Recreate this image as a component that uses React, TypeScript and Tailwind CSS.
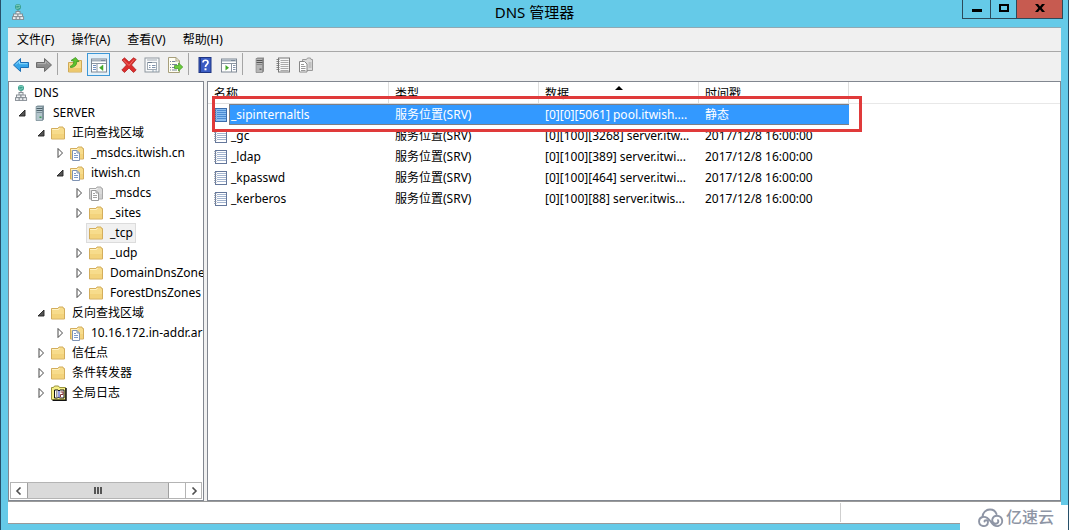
import type { ReactNode } from "react";

type IconProps = { className?: string };

function DnsIcon({ className = "w-4 h-4" }: IconProps) {
  return (
    <svg viewBox="0 0 16 16" className={className} aria-hidden="true">
      <circle cx="8" cy="3" r="3" fill="#3aa08e" />
      <path d="M6 2q2-2 4 0M6 4q2 1 4-1" stroke="#9be0cc" fill="none" strokeWidth=".8" />
      <path d="M8 6v2.500M5 11h6" stroke="#777f86" fill="none" />
      <g fill="#eef1f3" stroke="#80888f" strokeWidth=".9">
        <rect x="6" y="7.500" width="4" height="3" />
        <rect x="3.500" y="10" width="4.500" height="2.700" />
        <rect x="8" y="10" width="4.500" height="2.700" />
        <rect x="2.500" y="12.700" width="3.700" height="2.700" />
        <rect x="6.200" y="12.700" width="3.700" height="2.700" />
        <rect x="9.900" y="12.700" width="3.700" height="2.700" />
      </g>
    </svg>
  );
}

function ServerIcon({ gray = false }: { gray?: boolean }) {
  return (
    <svg viewBox="0 0 16 16" className="w-4 h-4" aria-hidden="true">
      <path d="M4 1.500 5.500.5h6.500v14l-1.500 1H4z" fill={gray ? "#8b8b8b" : "#7f929b"} />
      <path d="M4 1.500h6.500v14H4z" fill={gray ? "#b5b5b5" : "#b3c5cc"} stroke={gray ? "#858585" : "#73878f"} strokeWidth=".6" />
      <path d="M4.500 3.500h6M4.500 5.500h6" stroke={gray ? "#555" : "#4c6069"} />
      <path d="M4.500 7.500h6" stroke={gray ? "#888" : "#7e929b"} />
      <rect x="7.500" y="11.500" width="2" height="1.500" fill={gray ? "#666" : "#3c9c57"} />
    </svg>
  );
}

function FolderShape({ gray = false }: { gray?: boolean }) {
  return (
    <>
      <path d="M.5 3.500h6.500l1-1.500H12l.5 1.500h1v10.500H.5z" fill={gray ? "#dadada" : "#f7dc8c"} stroke={gray ? "#a8a8a8" : "#d3ad5c"} />
      <path d="M1 4.500h6.500l1-1.500" fill="none" stroke={gray ? "#f4f4f4" : "#fff3c4"} />
      <path d="M1 9h12v4.500H1z" fill={gray ? "#c6c6c6" : "#efc96c"} opacity=".5" />
    </>
  );
}

function FolderIcon() {
  return (
    <svg viewBox="0 0 16 16" className="w-4 h-4" aria-hidden="true">
      <FolderShape />
    </svg>
  );
}

function ZoneIcon({ gray = false }: { gray?: boolean }) {
  return (
    <svg viewBox="0 0 16 16" className="w-4 h-4" aria-hidden="true">
      <FolderShape gray={gray} />
      <path d="M2.500 5.500h4.500l2.500 2.500v7.500h-7z" fill="#fff" stroke={gray ? "#999" : "#7f93b3"} />
      <path d="M7 5.500V8h2.500" fill="none" stroke={gray ? "#999" : "#7f93b3"} />
      <path d="M4 8.500h2M4 10.500h4M4 12.500h4" stroke={gray ? "#999" : "#6c8fc4"} strokeWidth=".9" />
    </svg>
  );
}

function LogIcon() {
  return (
    <svg viewBox="0 0 16 16" className="w-4 h-4" aria-hidden="true">
      <path d="M.5 2.500h2l1-1.500h4l1 1.500h6v12H.5z" fill="#f6ef86" stroke="#98923a" />
      <path d="M15 3v12.500H1.500" fill="none" stroke="#111" strokeWidth="1.500" />
      <path d="M3.500 5v8h3l1-1 1 1H13V5H9L8 6 7 5z" fill="#fff" stroke="#111" />
      <path d="M8 6v6.500" stroke="#2a3bc0" />
      <path d="M5 7h1.500M5 9h1.500M5 11h1.500" stroke="#333" />
      <path d="M9.500 7H12v2.500H9.500V12" fill="none" stroke="#8a3434" />
    </svg>
  );
}

function RecordIcon({ selected = false }: { selected?: boolean }) {
  return (
    <svg viewBox="0 0 14 16" className="w-3.5 h-4 shrink-0" aria-hidden="true">
      <rect x="1.500" y="1.500" width="11" height="13" fill={selected ? "#8cc0f3" : "#fff"} stroke={selected ? "#3c6cab" : "#64779b"} />
      <path d="M3 3.500h9M3 5.500h9M3 7.500h9M3 9.500h9M3 11.500h9" stroke={selected ? "#4d8cd2" : "#a3b4cf"} />
      <path d="M0 2.500h2.500M0 4.500h2.500M0 6.500h2.500M0 8.500h2.500M0 10.500h2.500M0 12.500h2.500" stroke="#8a94a5" strokeWidth=".8" />
    </svg>
  );
}

function ArrowIcon({ forward = false }: { forward?: boolean }) {
  return (
    <svg viewBox="0 0 18 16" className="w-[18px] h-4" aria-hidden="true">
      {forward ? (
        <>
          <path d="M16.500 8 9.500 1.500v4h-8v5h8v4z" fill="#8b8b8b" stroke="#6c6c6c" />
          <path d="M2.500 6.700h8V4l3.500 3.500" fill="none" stroke="#b5b5b5" />
        </>
      ) : (
        <>
          <path d="M1.500 8 8.500 1.500v4h8v5h-8v4z" fill="#36a5e9" stroke="#1c6fb5" />
          <path d="M15.500 6.700h-8V4L4 7.500" fill="none" stroke="#8fdcff" />
        </>
      )}
    </svg>
  );
}

function FolderUpIcon() {
  return (
    <svg viewBox="0 0 16 16" className="w-4 h-4" aria-hidden="true">
      <path d="M.5 5.500h8l1-2h4V15H.5z" fill="#f7dc8c" stroke="#cfa956" />
      <path d="M1 11h12v3.500H1z" fill="#edc86c" />
      <path d="M2.500 10.500C6.500 10.500 9 8 8.700 4.500H11L7.500.5l-4.500 3 2.800.7C6 7 4.500 8.500 2.500 9z" fill="#5cc32d" stroke="#378a1b" strokeWidth=".7" />
    </svg>
  );
}

function PaneIcon({ right = false }: { right?: boolean }) {
  return (
    <svg viewBox="0 0 16 16" className="w-4 h-4" aria-hidden="true">
      <rect x=".5" y="2" width="15" height="13" fill="#fff" stroke="#7e8894" />
      <path d="M1 3.500h14" stroke="#a5b0bc" strokeWidth="2" />
      <path d="M10.500 3.500h1M12.500 3.500h1" stroke="#4d6078" />
      <path d={right ? "M1 6.500h14M10.500 6.500V15" : "M1 6.500h14M6 6.500V15"} stroke="#8b96a2" />
      {right ? (
        <>
          <path d="M4.500 8v5.500L8 10.700z" fill="#43a929" />
          <path d="M12 8.500h2.500M12 10.500h2.500M12 12.500h2.500" stroke="#8293ab" />
        </>
      ) : (
        <>
          <path d="M12 8v5.500L8.500 10.700z" fill="#43a929" stroke="#43a929" strokeWidth=".5" />
          <path d="M2 8.500h3M2 10.500h3M2 12.500h3" stroke="#6e8fbf" />
        </>
      )}
    </svg>
  );
}

function DeleteIcon() {
  return (
    <svg viewBox="0 0 16 16" className="w-4 h-4" aria-hidden="true">
      <path d="M1 3 3.500.8 8 5 12.500.8 15.200 2.500 10.500 8l4.700 5-2.700 2.500L8 11l-4.500 4.500L.8 13l4.700-5z" fill="#dc2d2d" stroke="#a81c1c" strokeWidth=".7" />
      <path d="M2.500 3 8 8.500l5-6" fill="none" stroke="#f28375" strokeWidth=".8" />
    </svg>
  );
}

function PropertiesIcon() {
  return (
    <svg viewBox="0 0 16 16" className="w-4 h-4" aria-hidden="true">
      <rect x="1" y="1" width="14" height="14" fill="#f8f9fa" stroke="#8d969e" />
      <path d="M3 3h10" stroke="#a3acb5" />
      <rect x="3.500" y="5.500" width="9" height="7" fill="#fff" stroke="#a0aab4" />
      <path d="M4 5.500h4" stroke="#6e7e90" />
      <path d="M5 8.500h1.500M5 10.500h1.500M8 8.500h3.500M8 10.500h3.500" stroke="#7f93ac" />
      <path d="M8 14h2M11.500 14H13" stroke="#8fa0b0" />
    </svg>
  );
}

function ExportIcon() {
  return (
    <svg viewBox="0 0 16 16" className="w-4 h-4" aria-hidden="true">
      <path d="M1.500.5H9L12.500 4v11.500h-11z" fill="#fffef2" stroke="#a79f7c" />
      <path d="M9 .5V4h3.500" fill="none" stroke="#a79f7c" />
      <path d="M3 4.500h1M3 7.500h1M3 10.500h1M3 13h1M5 4.500h3.500M5 7.500h5M5 10.500h3M5 13h5" stroke="#78859d" />
      <path d="M7.500 8.500h4V6l4.300 4-4.300 4v-2.500h-4z" fill="#6bcb3b" stroke="#3d9721" strokeWidth=".7" />
    </svg>
  );
}

function HelpIcon() {
  return (
    <svg viewBox="0 0 16 16" className="w-4 h-4" aria-hidden="true">
      <rect x="2" y=".5" width="12" height="15" fill="#3a5cc4" stroke="#1f3582" />
      <path d="M3.500 1v14" stroke="#20377f" />
      <path d="M6 5.500C6 2.500 11 2.500 11 5.500c0 2-2.500 2-2.500 4.500" fill="none" stroke="#fff" strokeWidth="1.700" />
      <rect x="7.500" y="11.300" width="2" height="2" fill="#fff" />
    </svg>
  );
}

function NotebookIcon() {
  return (
    <svg viewBox="0 0 16 16" className="w-4 h-4" aria-hidden="true">
      <rect x="3.500" y="1" width="11" height="14" fill="#f7f7f7" stroke="#777" />
      <path d="M5.500 3.500h8M5.500 5.500h8M5.500 7.500h8M5.500 9.500h8M5.500 11.500h8M5.500 13.500h8" stroke="#aaa" />
      <path d="M1.500 2.500h3M1.500 4.500h3M1.500 6.500h3M1.500 8.500h3M1.500 10.500h3M1.500 12.500h3" stroke="#777" strokeWidth=".9" />
    </svg>
  );
}

function CopyIcon() {
  return (
    <svg viewBox="0 0 16 16" className="w-4 h-4" aria-hidden="true">
      <path d="M4.500 2.500h4l1-1.500h3l.5 1.500h1.500v11h-10z" fill="#dcdcdc" stroke="#9a9a9a" />
      <path d="M1.500 4.500h5L9 7v8H1.500z" fill="#fff" stroke="#888" />
      <path d="M3 7.500h3M3 9.500h4.500M3 11.500h4.500M3 13.500h4.500" stroke="#999" />
      <path d="M10.500 6h3M10.500 8h3M10.500 10h3" stroke="#a5a5a5" />
    </svg>
  );
}

function Toggle({ open }: { open: boolean }) {
  return (
    <svg viewBox="0 0 12 12" className="w-3 h-3" aria-hidden="true">
      {open ? (
        <path d="M9 3v6H3z" fill="#555" stroke="#222" strokeWidth=".9" />
      ) : (
        <path d="M4 1.500 8.500 6 4 10.500z" fill="#fff" stroke="#333" strokeWidth=".9" />
      )}
    </svg>
  );
}

type Node = {
  label: string;
  icon: ReactNode;
  open?: boolean;
  leaf?: boolean;
  selected?: boolean;
  children?: Node[];
};

const tree: Node[] = [
  {
    label: "SERVER",
    icon: <ServerIcon />,
    open: true,
    children: [
      {
        label: "正向查找区域",
        icon: <FolderIcon />,
        open: true,
        children: [
          { label: "_msdcs.itwish.cn", icon: <ZoneIcon /> },
          {
            label: "itwish.cn",
            icon: <ZoneIcon />,
            open: true,
            children: [
              { label: "_msdcs", icon: <ZoneIcon gray /> },
              { label: "_sites", icon: <FolderIcon /> },
              { label: "_tcp", icon: <FolderIcon />, leaf: true, selected: true },
              { label: "_udp", icon: <FolderIcon /> },
              { label: "DomainDnsZones", icon: <FolderIcon /> },
              { label: "ForestDnsZones", icon: <FolderIcon /> },
            ],
          },
        ],
      },
      {
        label: "反向查找区域",
        icon: <FolderIcon />,
        open: true,
        children: [{ label: "10.16.172.in-addr.arpa", icon: <ZoneIcon /> }],
      },
      { label: "信任点", icon: <FolderIcon /> },
      { label: "条件转发器", icon: <FolderIcon /> },
      { label: "全局日志", icon: <LogIcon /> },
    ],
  },
];

function TreeItem({ node }: { node: Node }) {
  return (
    <li>
      <div className="flex h-5 items-center gap-px">
        {node.leaf ? (
          <span className="w-3 shrink-0" />
        ) : (
          <button type="button" aria-label={node.label} aria-expanded={!!node.open} className="shrink-0">
            <Toggle open={!!node.open} />
          </button>
        )}
        <span
          className={
            node.selected
              ? "flex h-5 items-center gap-[5px] border border-[#dcdcdc] bg-[#f1f1f1] px-[2px]"
              : "flex h-5 items-center gap-[5px] border border-transparent px-[2px]"
          }
        >
          <span className="shrink-0">{node.icon}</span>
          <span className="whitespace-nowrap">{node.label}</span>
        </span>
      </div>
      {node.children && (
        <ul className="pl-[19px]">
          {node.children.map((c) => (
            <TreeItem key={c.label} node={c} />
          ))}
        </ul>
      )}
    </li>
  );
}

function ToolButton({ label, active = false, children }: { label: string; active?: boolean; children: ReactNode }) {
  return (
    <button
      type="button"
      aria-label={label}
      className={
        active
          ? "flex h-[23px] w-[23px] items-center justify-center border border-[#3c97d6] bg-[#e3f1fa]"
          : "flex h-[23px] w-[23px] items-center justify-center"
      }
    >
      {children}
    </button>
  );
}

function Separator() {
  return <span className="mr-1 ml-[2px] h-[22px] w-px bg-[#a5a5a5]" />;
}

const records = [
  { name: "_sipinternaltls", data: "[0][0][5061] pool.itwish....", time: "静态", selected: true },
  { name: "_gc", data: "[0][100][3268] server.itw...", time: "2017/12/8 16:00:00" },
  { name: "_ldap", data: "[0][100][389] server.itwi...", time: "2017/12/8 16:00:00" },
  { name: "_kpasswd", data: "[0][100][464] server.itwi...", time: "2017/12/8 16:00:00" },
  { name: "_kerberos", data: "[0][100][88] server.itwis...", time: "2017/12/8 16:00:00" },
];

const menus = ["文件(F)", "操作(A)", "查看(V)", "帮助(H)"];

const headCell = "border-r border-b border-[#dedede] p-0 pt-[2px] pl-[6px] font-normal";
const cell = "p-0 pl-[6px]";
const selectedCell = "border-y border-[#7d7f86] bg-[#3399ff] p-0 pl-[6px]";

export default function App() {
  return (
    <div className="relative flex h-screen flex-col overflow-hidden border-x border-[#27506a] bg-[#65cae8] px-[7px] pb-[6px] font-['Noto_Sans','Noto_Sans_CJK_SC',sans-serif] text-[12px] text-black">
      <header className="grid h-[27px] shrink-0 grid-cols-[1fr_auto_1fr] items-start">
        <DnsIcon className="mt-1 ml-[2px] h-4 w-4" />
        <h1 className="text-[15px] leading-[25px]">DNS 管理器</h1>
        <div className="-mr-[2px] flex h-[19px] justify-self-end border border-t-0 border-[#2c4a5a]">
          <button type="button" aria-label="最小化" className="flex w-[27px] items-center justify-center">
            <svg viewBox="0 0 10 10" className="h-2.5 w-2.5"><path d="M0 5h10v3H0z" /></svg>
          </button>
          <button type="button" aria-label="最大化" className="flex w-[27px] items-center justify-center border-x border-[#2c4a5a]">
            <svg viewBox="0 0 10 8" className="mb-[2px] h-2 w-2.5"><path d="M1 1h8v6H1z" fill="none" stroke="#000" strokeWidth="2" /></svg>
          </button>
          <button type="button" aria-label="关闭" className="flex w-[45px] items-center justify-center bg-[#c75b50]">
            <svg viewBox="0 0 10 8" className="mb-[2px] h-2 w-2.5"><path d="M0 0h3l2 2.500L7 0h3L6.700 4 10 8H7L5 5.500 3 8H0l3.300-4z" /></svg>
          </button>
        </div>
      </header>

      <div className="flex min-h-0 flex-1 flex-col border-t border-[#8fa9b4] bg-[#f0f0f0]">
        <nav className="flex h-6 shrink-0 items-center gap-[17px] border-b border-[#a8a8a8] pl-[9px]">
          {menus.map((m) => (
            <button key={m} type="button" className="whitespace-nowrap">{m}</button>
          ))}
        </nav>

        <div role="toolbar" className="flex h-[29px] shrink-0 items-start pt-px pl-px">
          <ToolButton label="后退"><ArrowIcon /></ToolButton>
          <ToolButton label="前进"><ArrowIcon forward /></ToolButton>
          <Separator />
          <span className="w-[2px]" />
          <ToolButton label="上一级"><FolderUpIcon /></ToolButton>
          <ToolButton label="显示/隐藏控制台树" active><PaneIcon /></ToolButton>
          <span className="w-[7px]" />
          <ToolButton label="删除"><DeleteIcon /></ToolButton>
          <ToolButton label="属性"><PropertiesIcon /></ToolButton>
          <ToolButton label="导出列表"><ExportIcon /></ToolButton>
          <Separator />
          <ToolButton label="帮助"><HelpIcon /></ToolButton>
          <span className="w-px" />
          <ToolButton label="显示/隐藏操作窗格"><PaneIcon right /></ToolButton>
          <Separator />
          <span className="w-px" />
          <ToolButton label="服务器"><ServerIcon gray /></ToolButton>
          <ToolButton label="记录"><NotebookIcon /></ToolButton>
          <ToolButton label="复制"><CopyIcon /></ToolButton>
        </div>

        <main className="flex min-h-0 flex-1 gap-[3px]">
          <aside className="flex w-[196px] shrink-0 flex-col border border-[#828790] bg-white pb-px">
            <div className="min-h-0 flex-1 overflow-hidden pt-px">
              <div className="flex h-5 items-center gap-[5px] pl-1">
                <DnsIcon />
                <span>DNS</span>
              </div>
              <ul className="pl-[7px]">
                {tree.map((n) => (
                  <TreeItem key={n.label} node={n} />
                ))}
              </ul>
            </div>
            <div className="mx-px flex h-[17px] shrink-0 border border-[#b4b4b4]">
              <button type="button" aria-label="向左滚动" className="flex w-4 items-center justify-center">
                <svg viewBox="0 0 8 8" className="h-2 w-2"><path d="M5.500.5 2 4l3.500 3.500" fill="none" stroke="#505050" strokeWidth="1.600" /></svg>
              </button>
              <div className="flex w-[142px] items-center justify-center gap-px border-x border-[#a0a0a0] bg-[#dadada]">
                <span className="h-[7px] w-[2px] bg-[#555]" />
                <span className="h-[7px] w-[2px] bg-[#555]" />
                <span className="h-[7px] w-[2px] bg-[#555]" />
              </div>
              <span className="flex-1" />
              <button type="button" aria-label="向右滚动" className="flex w-4 items-center justify-center border-l border-[#b4b4b4]">
                <svg viewBox="0 0 8 8" className="h-2 w-2"><path d="M2.500.5 6 4 2.500 7.500" fill="none" stroke="#505050" strokeWidth="1.600" /></svg>
              </button>
            </div>
          </aside>

          <section className="relative min-w-0 flex-1 overflow-hidden border border-[#828790] bg-white">
            <table className="w-full table-fixed border-separate border-spacing-0 whitespace-nowrap text-left">
              <colgroup>
                <col className="w-[181px]" />
                <col className="w-[150px]" />
                <col className="w-[160px]" />
                <col className="w-[150px]" />
                <col />
              </colgroup>
              <thead>
                <tr className="h-[22px]">
                  <th className={headCell}>名称</th>
                  <th className={headCell}>类型</th>
                  <th aria-sort="ascending" className={`relative ${headCell}`}>
                    数据
                    <svg viewBox="0 0 8 4" className="absolute top-1 left-1/2 h-1 w-2 -translate-x-1/2"><path d="M4 0 8 4H0z" /></svg>
                  </th>
                  <th className={headCell}>时间戳</th>
                  <th className="border-b border-[#e8e8e8] p-0" />
                </tr>
              </thead>
              <tbody>
                {records.map((r) => (
                  <tr key={r.name} className={r.selected ? "h-[21px] text-white" : "h-[21px]"}>
                    <td className={cell}>
                      <div className="flex h-[21px] items-center gap-px">
                        <RecordIcon selected={r.selected} />
                        <span
                          className={
                            r.selected
                              ? "flex h-[21px] flex-1 items-center border-y border-l border-[#7d7f86] bg-[#3399ff] pl-px"
                              : "flex h-[21px] flex-1 items-center pl-[2px]"
                          }
                        >
                          {r.name}
                        </span>
                      </div>
                    </td>
                    <td className={r.selected ? selectedCell : cell}>服务位置(SRV)</td>
                    <td className={r.selected ? selectedCell : cell}>{r.data}</td>
                    <td className={r.selected ? selectedCell : cell}>{r.time}</td>
                    <td className="p-0" />
                  </tr>
                ))}
              </tbody>
            </table>
            <div className="pointer-events-none absolute top-[14px] left-1 h-9 w-[650px] border-3 border-[#e03a3a]" />
          </section>
        </main>

        <footer className="flex h-[23px] shrink-0 border-t border-b border-[#9a9a9a] bg-white">
          <span className="flex-1" />
          <span className="my-px w-[221px] border-l border-[#cfcfcf]" />
        </footer>
      </div>

      <div className="absolute -right-px bottom-0 flex h-[25px] w-[109px] items-center gap-[2px] bg-white pl-[18px] text-[16px] leading-[25px] font-medium text-[#8e95a5]">
        <svg viewBox="0 0 26 20" className="h-5 w-[26px]" fill="none" stroke="#8e95a5" strokeWidth="1.900" strokeLinecap="round" aria-hidden="true">
          <path d="M4.500 9C4.500 4.800 8 1.500 12 1.500c3 0 5.500 1.500 6.500 4.500" />
          <path d="M6.500 13.500c0-1.500 3.500-2 3.500.5 0 3.500-3 4.500-5 4a4.600 4.600 0 0 1-.5-9c5-1 6.500 2.500 8.500 5 2 3 4 4.500 7 4a5.200 5.200 0 0 0-1-10.300c-5 0-6 5.800-3 7.500 3 1.500 5-1 4-3" />
        </svg>
        <span>亿速云</span>
      </div>
    </div>
  );
}
